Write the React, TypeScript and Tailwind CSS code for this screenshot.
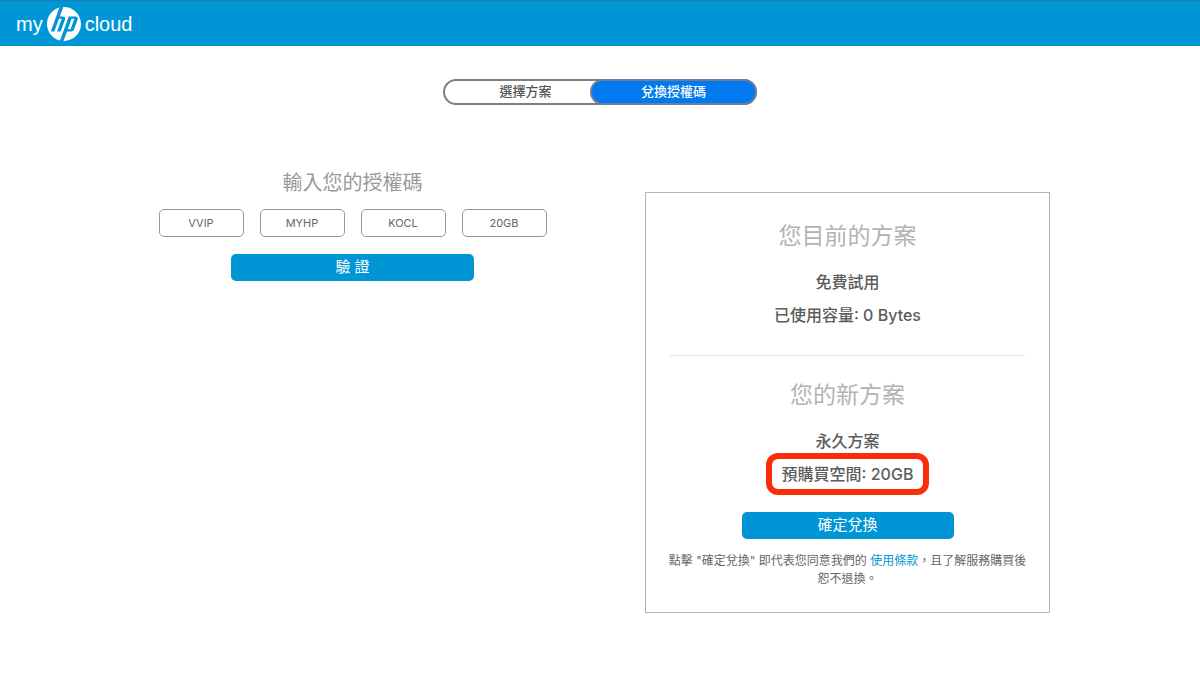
import { useState } from "react";
import { SiHp } from "react-icons/si";

const initialCode = ["VVIP", "MYHP", "KOCL", "20GB"];

const Header = () => {
  return (
    <header className="flex h-[46px] items-center border-t border-[#1a7fae] bg-[#0096d6] px-4">
      <a
        href="#"
        className="flex items-center font-['Liberation_Sans',sans-serif] text-xl leading-none text-white"
      >
        <span>my</span>
        <SiHp className="mx-1 size-[34px]" />
        <span>cloud</span>
      </a>
    </header>
  );
};

const PlanTabs = () => {
  return (
    <nav className="mx-auto flex h-[26px] w-[314px] rounded-full border-2 border-[#808080] text-[13px] font-medium">
      <button type="button" className="-mr-4 flex-1 text-[#555]">
        選擇方案
      </button>
      <button
        type="button"
        className="relative -my-0.5 -mr-0.5 w-[167px] rounded-full border-2 border-[#6b7f99] bg-[#007aee] text-white"
      >
        兌換授權碼
      </button>
    </nav>
  );
};

const CodeForm = () => {
  const [code, setCode] = useState(initialCode);

  const handleChange = (index: number, value: string) => {
    setCode(code.map((part, i) => (i === index ? value : part)));
  };

  return (
    <form
      onSubmit={(e) => e.preventDefault()}
      className="flex flex-1 flex-col items-center"
    >
      <h2 className="text-xl leading-7 text-[#999]">輸入您的授權碼</h2>
      <div className="mt-3 flex gap-4">
        {code.map((part, i) => (
          <input
            key={i}
            type="text"
            aria-label={`授權碼 ${i + 1}`}
            value={part}
            onChange={(e) => handleChange(i, e.target.value)}
            className="h-7 w-[85px] rounded-[5px] border border-[#999] text-center text-[11px] text-[#666]"
          />
        ))}
      </div>
      <button
        type="submit"
        className="mt-[17px] h-[27px] w-[243px] rounded-[5px] bg-[#0096d6] text-[15px] text-white"
      >
        驗 證
      </button>
    </form>
  );
};

const PlanCard = () => {
  return (
    <section className="mx-[45px] mt-[23px] flex-1 border border-[#b3b3b3] px-5 pt-[23px] pb-6 text-center">
      <h2 className="text-[23px] leading-10 text-[#b3b3b3]">您目前的方案</h2>
      <p className="mt-[14px] text-base leading-6 font-medium text-[#5c5c5c]">
        免費試用
      </p>
      <p className="mt-[9px] text-base leading-6 font-medium text-[#5c5c5c]">
        已使用容量: 0 Bytes
      </p>

      <hr className="mx-1 mt-7 mb-[19px] border-[#e5e5e5]" />

      <h2 className="text-[23px] leading-10 text-[#b3b3b3]">您的新方案</h2>
      <p className="mt-[14px] text-base leading-6 font-medium text-[#5c5c5c]">
        永久方案
      </p>
      <p className="mx-auto w-fit rounded-xl border-[6px] border-[#fb2c0a] px-2.5 py-[3px] text-base leading-6 font-medium text-[#5c5c5c]">
        預購買空間: 20GB
      </p>
      <button
        type="button"
        className="mt-[17px] h-[27px] w-[212px] rounded-[5px] bg-[#0096d6] text-[15px] text-white"
      >
        確定兌換
      </button>
      <p className="mt-[13px] text-xs leading-[18px] text-[#666]">
        點擊 "確定兌換" 即代表您同意我們的{" "}
        <a href="#" className="text-[#0096d6]">
          使用條款
        </a>
        ，且了解服務購買後恕不退換。
      </p>
    </section>
  );
};

const App = () => {
  return (
    <div
      lang="zh-TW"
      className="min-h-screen bg-white font-[Inter,'Noto_Sans_CJK_TC',sans-serif]"
    >
      <Header />
      <main className="pt-[33px] pb-10">
        <PlanTabs />
        <div className="mx-auto mt-16 flex max-w-[990px] items-start">
          <CodeForm />
          <div className="flex flex-1">
            <PlanCard />
          </div>
        </div>
      </main>
    </div>
  );
};

export default App;
